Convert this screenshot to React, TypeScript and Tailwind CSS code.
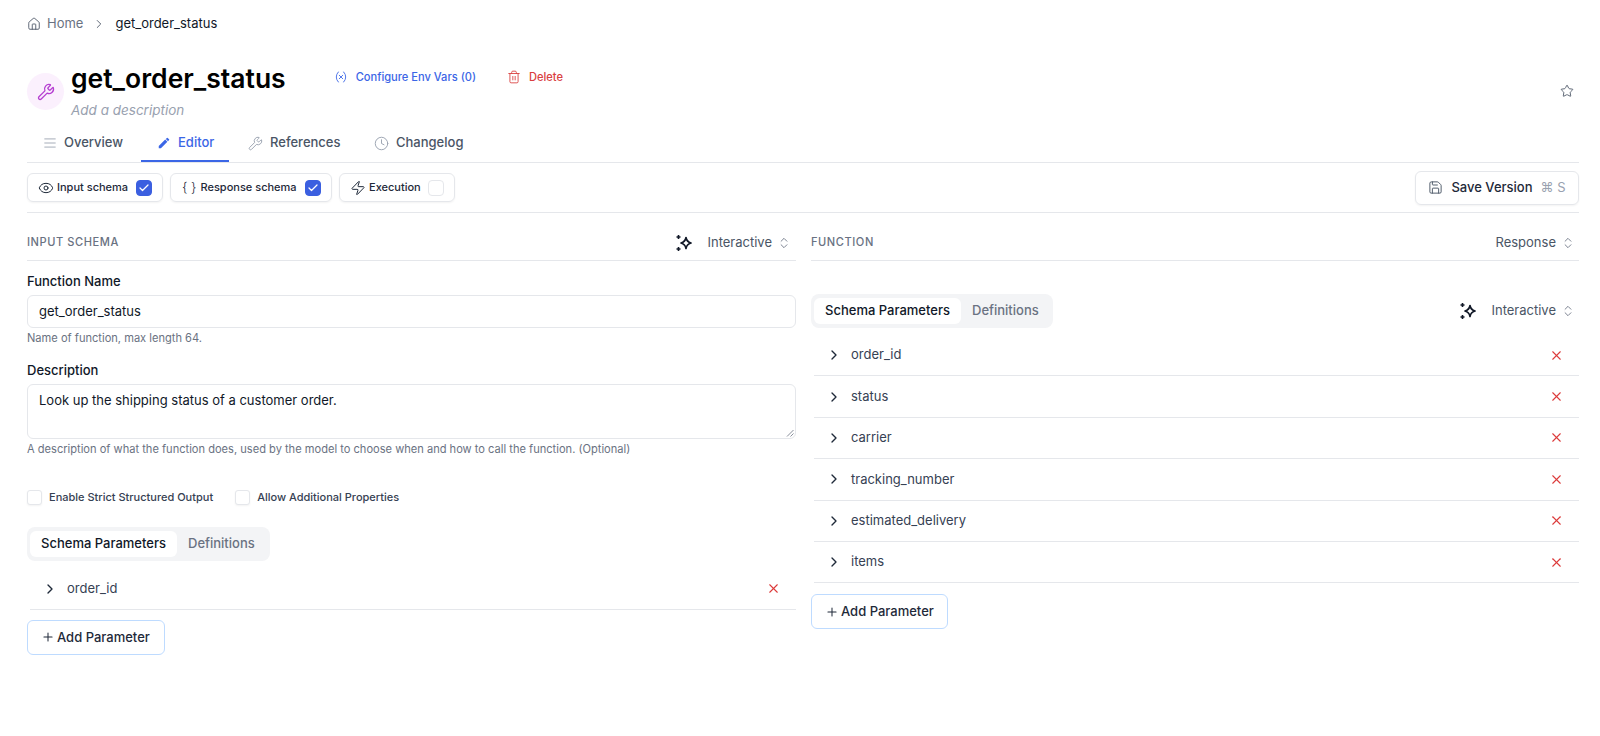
import React from "react";
import {
  AlignJustify,
  Check,
  ChevronRight,
  ChevronsUpDown,
  Clock,
  Eye,
  House,
  Plus,
  Save,
  Star,
  Trash2,
  Variable,
  Wrench,
  X,
  Zap,
} from "lucide-react";
import { MdEdit } from "react-icons/md";

function Sparkle() {
  return (
    <svg className="h-[18px] w-[18px] text-[#111827]" viewBox="0 0 18 18" fill="none">
      <path
        d="M11 3.5c.5 3 1.6 4.6 5 5.5-3.4.9-4.5 2.5-5 5.5-.5-3-1.6-4.6-5-5.5 3.4-.9 4.5-2.5 5-5.5Z"
        stroke="currentColor"
        strokeWidth="1.7"
        strokeLinejoin="round"
      />
      <path d="M3.5 1v4M1.5 3h4M3.5 13v4M1.5 15h4" stroke="currentColor" strokeWidth="1.6" />
    </svg>
  );
}

function UpDown() {
  return <ChevronsUpDown className="h-3.5 w-3.5 text-gray-500" strokeWidth={1.5} />;
}

function Chip({ icon, label, checked, width }: { icon: React.ReactNode; label: string; checked: boolean; width: string }) {
  return (
    <div className={`flex h-[29px] items-center justify-between rounded-md border border-gray-200 pr-[10px] pl-[10px] shadow-xs ${width}`}>
      <div className="flex items-center gap-[3px] text-[11px] font-medium whitespace-nowrap text-gray-800">
        {icon}
        {label}
      </div>
      <span
        className={`flex h-[16px] w-[16px] shrink-0 items-center justify-center rounded-[4px] border ${
          checked ? "border-[#3b5fe0] bg-[#3b5fe0]" : "border-gray-200 bg-white"
        }`}
      >
        {checked && <Check className="h-3 w-3 text-white" strokeWidth={2.5} />}
      </span>
    </div>
  );
}

function Tab({ icon, label, active, className }: { icon: React.ReactNode; label: string; active?: boolean; className: string }) {
  return (
    <div
      className={`flex h-[38px] items-center gap-[7px] border-b-2 pt-[2px] text-[13px] font-medium ${className} ${
        active ? "border-[#3b66e6] text-[#3b66e6]" : "border-transparent text-gray-600"
      }`}
    >
      {icon}
      {label}
    </div>
  );
}

function SegTabs() {
  return (
    <div className="flex h-[34px] items-center rounded-lg bg-gray-100 p-[3px] text-[13px] font-medium whitespace-nowrap">
      <div className="flex h-[26px] w-[147px] items-center justify-center rounded-md bg-white text-gray-900">Schema Parameters</div>
      <div className="px-[11px] text-gray-500">Definitions</div>
    </div>
  );
}

function ParamRow({ name }: { name: string }) {
  return (
    <div className="ml-[3px] flex h-[41.4px] items-center justify-between border-b border-gray-200 pr-[15px] pl-[12px]">
      <div className="flex items-center gap-[9px] text-[13px] text-gray-700">
        <ChevronRight className="h-[16px] w-[16px] text-gray-800" strokeWidth={2} />
        {name}
      </div>
      <X className="h-[15px] w-[15px] text-[#dc3b3b]" strokeWidth={1.75} />
    </div>
  );
}

function AddParam({ className }: { className?: string }) {
  return (
    <button className={`flex h-[35px] items-center gap-[2px] rounded-md border border-blue-200 bg-white pl-[13px] text-[13px] font-medium whitespace-nowrap text-gray-800 ${className ?? ""}`}>
      <Plus className="h-3.5 w-3.5" strokeWidth={1.75} />
      Add Parameter
    </button>
  );
}

function Box({ label }: { label: string }) {
  return (
    <label className="flex items-center gap-[7px] text-[11px] font-medium whitespace-nowrap text-gray-700">
      <span className="h-[15px] w-[15px] rounded-[3px] border border-gray-200 bg-white shadow-xs" />
      {label}
    </label>
  );
}

export default function App() {
  return (
    <div className="h-[736px] overflow-hidden bg-white pr-[21px] pl-[27px] font-['Inter',sans-serif]">
      <nav className="flex h-[47px] items-center text-[13px]">
        <House className="h-3.5 w-3.5 text-gray-600" strokeWidth={1.5} />
        <span className="ml-[6px] text-gray-500">Home</span>
        <ChevronRight className="mx-[9px] h-3.5 w-3.5 text-gray-600" strokeWidth={1.5} />
        <span className="text-gray-900">get_order_status</span>
      </nav>

      <header className="relative mt-[16px] flex items-start">
        <div className="mt-[10px] flex h-[37px] w-[37px] items-center justify-center rounded-full bg-[#fbf0fd]">
          <Wrench className="h-[18px] w-[18px] text-[#b53fd1]" strokeWidth={1.75} />
        </div>
        <div className="ml-[7px]">
          <h1 className="-mt-[2px] text-[26.5px] leading-[34px] font-semibold text-black">get_order_status</h1>
          <p className="mt-[5px] text-[13.5px] leading-5 text-gray-400 italic">Add a description</p>
        </div>
        <div className="ml-[48px] flex h-[28px] items-center text-[11.1px] font-medium">
          <Variable className="h-3.5 w-3.5 text-[#3b66e6]" strokeWidth={1.5} />
          <span className="ml-2 text-[#3b66e6]">Configure Env Vars (0)</span>
          <Trash2 className="ml-[31px] h-3.5 w-3.5 text-[#d9403f]" strokeWidth={1.5} />
          <span className="ml-2 text-[#d9403f]">Delete</span>
        </div>
        <Star className="absolute top-[21px] right-[5px] h-3.5 w-3.5 text-gray-600" strokeWidth={1.5} />
      </header>

      <div className="mt-[4px] flex border-b border-gray-200">
        <Tab className="w-[114px] pl-4" label="Overview" icon={<AlignJustify className="h-3.5 w-3.5 text-gray-400" strokeWidth={1.5} />} />
        <Tab className="w-[88px] pl-[16px]" active label="Editor" icon={<MdEdit className="h-3.5 w-3.5" />} />
        <Tab className="ml-[19px] w-[126px]" label="References" icon={<Wrench className="h-[15px] w-[15px] text-gray-400" strokeWidth={1.5} />} />
        <Tab className="" label="Changelog" icon={<Clock className="h-[15px] w-[15px] text-gray-400" strokeWidth={1.5} />} />
      </div>

      <div className="flex h-[50px] items-center justify-between border-b border-gray-200">
        <div className="flex gap-[7px]">
          <Chip width="w-[136px]" checked label="Input schema" icon={<Eye className="h-4 w-4" strokeWidth={1.5} />} />
          <Chip width="w-[162px]" checked label="Response schema" icon={<span className="mr-[1px] ml-[1px] text-[13px] leading-none font-light whitespace-nowrap">{"{ }"}</span>} />
          <Chip width="w-[116px]" checked={false} label="Execution" icon={<Zap className="h-4 w-4" strokeWidth={1.5} />} />
        </div>
        <button className="flex h-[34px] w-[164px] items-center justify-center gap-2 rounded-md border border-gray-200 text-[13px] font-medium text-gray-800 shadow-xs">
          <Save className="h-[15px] w-[15px] text-gray-600" strokeWidth={1.5} />
          Save Version
          <span className="font-normal text-gray-400">⌘ S</span>
        </button>
      </div>

      <main className="flex gap-[15px]">
        <section className="w-[769px]">
          <div className="flex h-[48px] items-center justify-between border-b border-gray-200 pt-[12px] pr-[5px]">
            <h2 className="text-[11.1px] font-medium tracking-wider text-gray-500">INPUT SCHEMA</h2>
            <div className="flex items-center text-[13px] text-gray-600">
              <Sparkle />
              <span className="mr-[5px] ml-[14px]">Interactive</span>
              <UpDown />
            </div>
          </div>
          <label className="mt-[10px] block text-[13px] leading-5 font-medium text-gray-900">Function Name</label>
          <div className="mt-[4px] flex h-[33px] items-center rounded-md border border-gray-200 px-[11px] text-[13px] text-gray-900">
            get_order_status
          </div>
          <p className="mt-[3px] text-[11.1px] leading-[14px] text-gray-500">Name of function, max length 64.</p>
          <label className="mt-[15px] block text-[13px] leading-5 font-medium text-gray-900">Description</label>
          <div className="relative mt-[4px] h-[55px] rounded-md border border-gray-200 px-[11px] py-[5px] text-[13px] leading-5 text-gray-900">
            Look up the shipping status of a customer order.
            <svg className="absolute right-[1px] bottom-[1px] h-2 w-2 text-gray-500" viewBox="0 0 8 8" fill="none">
              <path d="M1 7.5 7.5 1M4.5 7.5l3-3" stroke="currentColor" strokeWidth="0.8" />
            </svg>
          </div>
          <p className="mt-[3px] text-[11.1px] leading-[14px] text-gray-500">
            A description of what the function does, used by the model to choose when and how to call the function. (Optional)
          </p>
          <div className="mt-[33px] flex gap-[22px]">
            <Box label="Enable Strict Structured Output" />
            <Box label="Allow Additional Properties" />
          </div>
          <div className="mt-[21px] w-[243px]">
            <SegTabs />
          </div>
          <div className="mt-[8px]">
            <ParamRow name="order_id" />
          </div>
          <AddParam className="mt-[10px] w-[138px]" />
        </section>

        <section className="w-[768px]">
          <div className="flex h-[48px] items-center justify-between border-b border-gray-200 pt-[12px] pr-[4px]">
            <h2 className="text-[11.1px] font-medium tracking-wider text-gray-500">FUNCTION</h2>
            <div className="flex items-center text-[13px] text-gray-600">
              <span className="mr-[5px]">Response</span>
              <UpDown />
            </div>
          </div>
          <div className="mt-[33px] flex items-center justify-between pr-[4px]">
            <div className="w-[242px]">
              <SegTabs />
            </div>
            <div className="flex items-center text-[13px] text-gray-600">
              <Sparkle />
              <span className="mr-[5px] ml-[14px]">Interactive</span>
              <UpDown />
            </div>
          </div>
          <div className="mt-[7px]">
            {["order_id", "status", "carrier", "tracking_number", "estimated_delivery", "items"].map((name) => (
              <ParamRow key={name} name={name} />
            ))}
          </div>
          <AddParam className="mt-[11px] w-[137px]" />
        </section>
      </main>
    </div>
  );
}
